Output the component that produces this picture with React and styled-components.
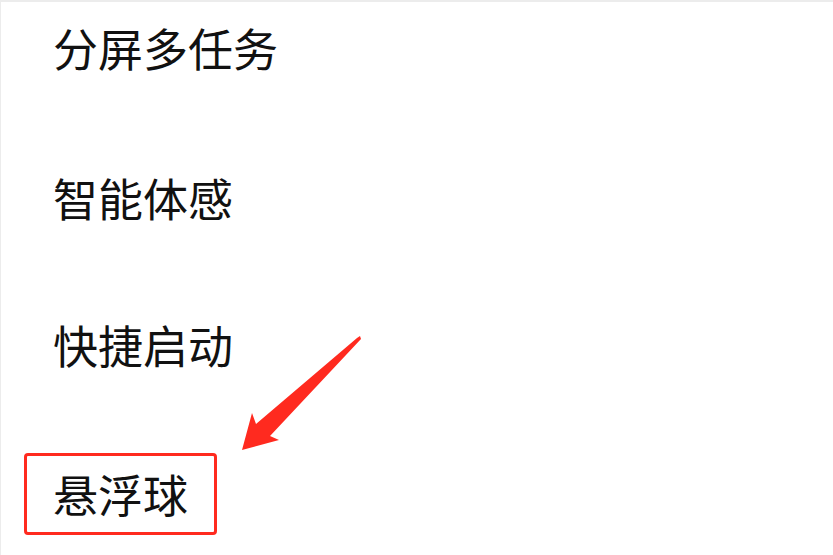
import React from "react";
import styled, { createGlobalStyle } from "styled-components";

const GlobalStyle = createGlobalStyle`
  html, body {
    margin: 0;
    padding: 0;
    background: #ffffff;
  }
  body {
    font-family: "Noto Sans CJK SC", "Noto Sans", sans-serif;
  }
`;

const Page = styled.div`
  position: relative;
  width: 833px;
  height: 555px;
  box-sizing: border-box;
  border-top: 2px solid #ececec;
  border-left: 1px solid #ececec;
  overflow: hidden;
  background: #fff;
`;

const List = styled.ul`
  list-style: none;
  margin: 0;
  padding: 21px 0 0 52px;
  display: flex;
  flex-direction: column;
  align-items: flex-start;
`;

const Item = styled.li`
  font-size: 45px;
  line-height: 50px;
  height: 50px;
  color: #111;
  letter-spacing: 0;
  margin-top: ${(p) => p.$gap || 0}px;
  ${(p) =>
    p.$marked &&
    `
    margin-left: -29px;
    padding: 13px 26px 13px 26px;
    border: 3px solid #ff2a1f;
    border-radius: 4px;
  `}
`;

const Arrow = styled.svg`
  position: absolute;
  left: 0;
  top: 0;
  pointer-events: none;
`;

const items = [
  { label: "分屏多任务", gap: 0 },
  { label: "智能体感", gap: 100 },
  { label: "快捷启动", gap: 97 },
  { label: "悬浮球", gap: 83, marked: true },
];

export default function App() {
  return (
    <>
      <GlobalStyle />
      <Page>
        <List>
          {items.map((it) => (
            <Item key={it.label} $gap={it.gap} $marked={it.marked}>
              {it.label}
            </Item>
          ))}
        </List>
        <Arrow width="833" height="555" viewBox="0 0 833 555">
          <polygon
            points="359,334 360,337 269,434 278,438 241,448 251,411 255,422 356,336"
            fill="#ff2a1f"
          />
        </Arrow>
      </Page>
    </>
  );
}
